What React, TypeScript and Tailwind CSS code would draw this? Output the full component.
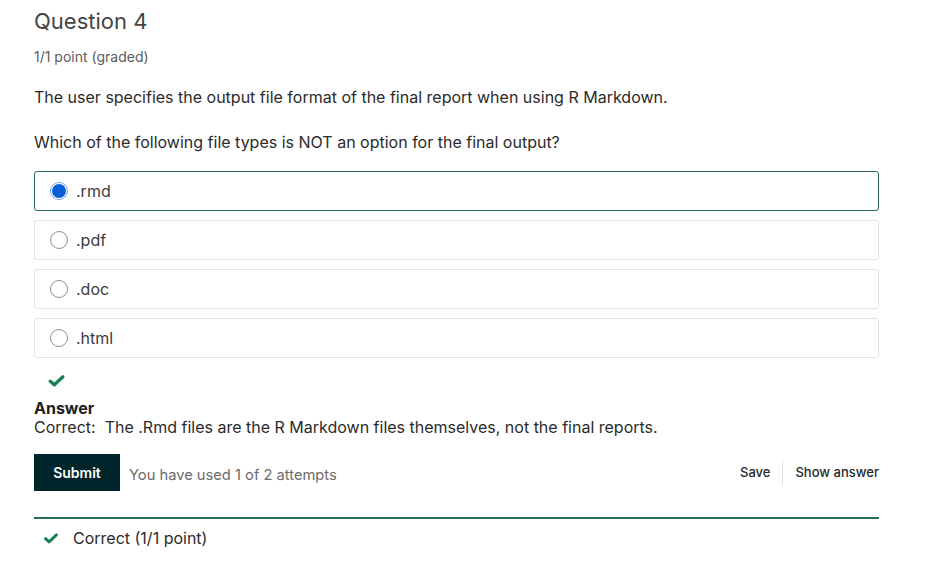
const options = [".rmd", ".pdf", ".doc", ".html"];

function Check({ className }: { className?: string }) {
  return (
    <svg viewBox="0 0 16 12" className={className} fill="none">
      <path d="M1.8 6.2 L5.8 9.8 L14.2 1.9" stroke="#178253" strokeWidth="3.4" strokeLinecap="round" strokeLinejoin="round" />
    </svg>
  );
}

export default function App() {
  return (
    <div className="min-h-[574px] bg-white pl-[34px] w-[879px] text-[#212529]" style={{ fontFamily: "Inter, 'Noto Sans', sans-serif" }}>
      {/* En-tête */}
      <h2 className="pt-[6px] text-[22px] leading-[30px] text-[#454545]">Question 4</h2>
      <p className="mt-[11px] text-[14px] leading-[20px] text-[#5c5c5c]">1/1 point (graded)</p>

      {/* Énoncé */}
      <p className="mt-[18px] text-[16px] leading-[24px] text-[#2b2b2b]">
        The user specifies the output file format of the final report when using R Markdown.
      </p>
      <p className="mt-[21px] text-[16px] leading-[24px] text-[#2b2b2b]">
        Which of the following file types is NOT an option for the final output?
      </p>

      {/* Choix */}
      <div className="mt-[17px] flex flex-col gap-[9px]">
        {options.map((opt, i) => (
          <label
            key={opt}
            className={
              i === 0
                ? "flex h-[40px] items-center gap-[8px] rounded-[3px] border border-[#2b6b5a] pl-[15px]"
                : "flex h-[40px] items-center gap-[8px] rounded-[3px] border border-[#e3e3e3] pl-[15px]"
            }
          >
            {i === 0 ? (
              <span className="flex h-[18px] w-[18px] items-center justify-center rounded-full border border-[#6b9ee8] bg-white">
                <span className="h-[16px] w-[16px] rounded-full border border-white bg-[#0a5fd8]" />
              </span>
            ) : (
              <span className="h-[18px] w-[18px] rounded-full border border-[#8f8f8f] bg-white" />
            )}
            <span className="text-[16px] text-[#3b3b3b]">{opt}</span>
          </label>
        ))}
      </div>

      {/* Résultat */}
      <Check className="mt-[17px] ml-[14px] h-[12px] w-[17px]" />
      <div className="mt-[12px] text-[16px] leading-[19px]">
        <p className="font-bold text-[#1e1e1e]">Answer</p>
        <p className="text-[#2b2b2b]">Correct:&nbsp; The .Rmd files are the R Markdown files themselves, not the final reports.</p>
      </div>

      {/* Actions */}
      <div className="mt-[17px] flex items-center">
        <button className="h-[37px] w-[86px] bg-[#00262b] text-[14px] font-semibold text-white">Submit</button>
        <span className="ml-[9px] mt-[6px] text-[14.7px] text-[#6b6b6b]">You have used 1 of 2 attempts</span>
        <div className="ml-auto flex items-center text-[13px] font-medium text-[#1f2a2c]">
          <span>Save</span>
          <span className="mx-[12px] h-[24px] w-px bg-[#e1e1e1]" />
          <span>Show answer</span>
        </div>
      </div>

      {/* Statut */}
      <div className="mt-[26px] border-t-2 border-[#2b6b5a] pt-[7px]">
        <div className="flex items-center gap-[15px] pl-[10px]">
          <Check className="h-[11px] w-[14px]" />
          <span className="text-[16px] text-[#2b2b2b]">Correct (1/1 point)</span>
        </div>
      </div>
    </div>
  );
}
